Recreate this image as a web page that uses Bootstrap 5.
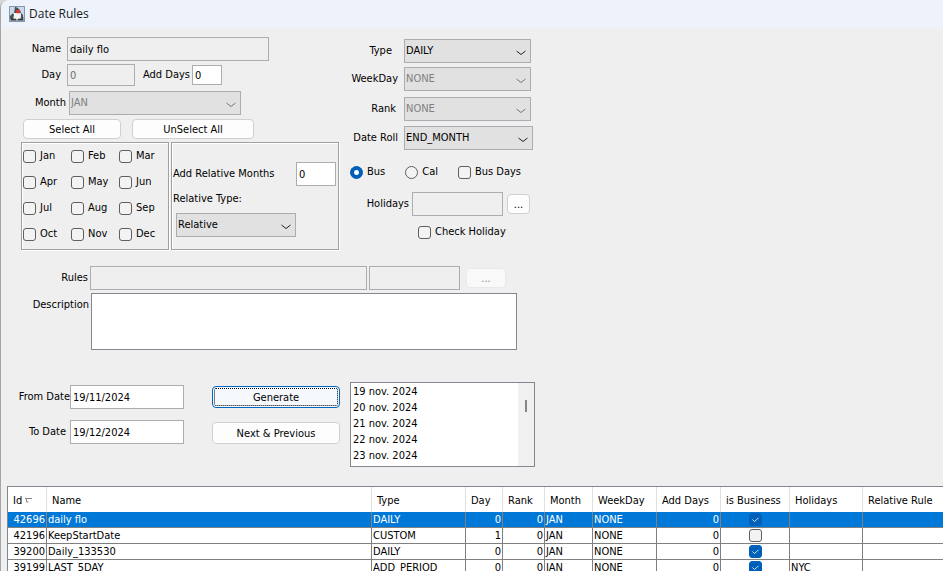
<!DOCTYPE html>
<html lang="en">
<head>
<meta charset="utf-8">
<meta name="viewport" content="width=device-width, initial-scale=1">
<title>Date Rules</title>
<link href="https://cdn.jsdelivr.net/npm/bootstrap@5.3.0/dist/css/bootstrap.min.css" rel="stylesheet">
<style>
  :root { --line: #abadb3; --edge: #828790; --face: #efefef; --combo: #e1e1e1; }
  body { font-family: Tahoma, "DejaVu Sans Condensed", "Noto Sans", sans-serif; font-size: 11px; line-height: 16px; color: #000; background: #d9d9d9; }
  .window { background: var(--face); border-left: 1px solid #a5a5a8; border-top-left-radius: 8px; }
  .titlebar { height: 28px; background: #eef3fb; font-family: "Segoe UI", "Open Sans", sans-serif; font-size: 12px; color: #1a1a1a; border-top-left-radius: 8px; }
  .form-area { padding: 9px 0 0 20px; }
  .left-side { width: 318px; }
  .right-side { padding: 2px 0 0 7px; }
  label { white-space: nowrap; }
  .form-control, .form-select { font-size: 11px; line-height: 16px; height: 24px; min-height: 0; padding: 0 2px; border: 1px solid var(--line); border-radius: 0; color: #000; flex: none; }
  .form-control { background: #fff; }
  .form-control:disabled, .form-control[readonly] { background: var(--face); color: #6d6d6d; }
  .form-control[readonly] { color: #000; }
  .form-select { padding: 0 20px 0 1px; background: var(--combo) url("data:image/svg+xml,%3Csvg xmlns='http://www.w3.org/2000/svg' viewBox='0 0 10 6'%3E%3Cpath fill='none' stroke='%23222' d='M.5 1 5 4.500 9.500 1'/%3E%3C/svg%3E") no-repeat right 4px top 10px / 10px 6px; }
  .form-select:disabled { background-color: var(--combo); color: #808080; background-image: url("data:image/svg+xml,%3Csvg xmlns='http://www.w3.org/2000/svg' viewBox='0 0 10 6'%3E%3Cpath fill='none' stroke='%23777' d='M.5 1 5 4.500 9.500 1'/%3E%3C/svg%3E"); }
  .short { height: 22px; }
  .shorter { height: 20px; }
  .btn { font-size: 11px; line-height: 16px; height: 20px; padding: 1px 0 0; background: #fdfdfd; border: 1px solid #d0d0d0; border-radius: 4px; color: #000; flex: none; }
  .btn:disabled { background: #f9f9f9; border-color: #e9e9e9; color: #838383; opacity: 1; }
  .btn-tall { height: 22px; width: 128px; padding-top: 2px; }
  .btn-default { background: #f5f9fe; border-color: #0067c0; outline: 1px dotted #000; outline-offset: -3px; }
  .form-check-input { width: 13px; height: 13px; margin: 0; border: 1px solid #5f5f5f; background-color: #f3f3f3; flex: none; }
  .form-check-input[type=checkbox] { border-radius: 3px; }
  .form-check-input:checked { background-color: #005fb8; border-color: #005fb8; }
  .form-check-input:checked[type=checkbox] { background-image: url("data:image/svg+xml,%3Csvg xmlns='http://www.w3.org/2000/svg' viewBox='0 0 13 13'%3E%3Cpath fill='none' stroke='%23fff' d='M3 6.500 5.500 9 10 4.500'/%3E%3C/svg%3E"); }
  .form-check-input:checked[type=radio] { background-image: radial-gradient(circle, #fff 2px, #005fb8 3px); }
  .tick { display: flex; align-items: center; gap: 4px; height: 16px; }
  .lab { width: 46px; text-align: right; flex: none; }
  .lab-month { width: 48px; padding-right: 3px; }
  .lab-r { width: 58px; text-align: right; flex: none; }
  .lab-in { padding-right: 2px; }
  .lab-in-2 { padding-right: 6px; }
  .lab-type { padding-right: 12px; }
  .lab-wide { width: 70px; text-align: right; flex: none; }
  .lab-rules { width: 67px; text-align: right; flex: none; }
  .lab-hol { width: 66px; text-align: right; flex: none; padding-right: 3px; }
  .lab-date { width: 49px; direction: rtl; flex: none; }
  .row-a { margin-bottom: 3px; }
  .row-b { margin-bottom: 5px; }
  .row-c { margin-bottom: 6px; }
  .gap-tight { gap: 2px; }
  .buttons { padding: 1px 0 0 2px; gap: 11px; }
  .choices { gap: 20px; margin-top: 14px; }
  .date-fields { display: grid; gap: 11px; padding-top: 3px; align-content: start; }
  .date-actions { display: grid; gap: 14px; padding: 4px 10px 0 28px; align-content: start; }
  .w-name { width: 202px; } .w-day { width: 68px; } .w-add { width: 30px; } .w-month { width: 172px; }
  .w-sel { width: 98px; } .w-unsel { width: 122px; } .w-combo { width: 127px; } .w-roll { width: 129px; }
  .w-rel { width: 120px; } .w-num { width: 40px; } .w-hol { width: 91px; } .w-dots { width: 23px; }
  .w-rules { width: 277px; } .w-dots2 { width: 40px; } .w-date { width: 114px; }
  .panel { border: 1px solid #a0a0a0; box-shadow: inset 1px 1px #fff, 1px 1px #fff; height: 108px; }
  .months { width: 148px; display: grid; grid-template-columns: repeat(3, 48px); grid-auto-rows: 26px; align-items: center; padding: 0 1px; }
  .relative { width: 168px; padding: 19px 2px 0 0; }
  .relative label { padding-left: 1px; }
  .relative .form-select { margin-left: 4px; }
  .desc { width: 426px; height: 57px; border-color: var(--edge); resize: none; }
  .results { width: 185px; height: 85px; background: #fff; border: 1px solid var(--edge); }
  .results ul { padding: 1px 0 0 2px; }
  .track { width: 16px; background: #f0f0f0; padding: 17px 7px 0; }
  .thumb { width: 2px; height: 12px; background: #858585; }
  .rules-table { border-top: 1px solid var(--edge); border-left: 1px solid var(--edge); margin: 19px 0 0 6px; background: #fff; }
  .rules-table table { table-layout: fixed; width: 100%; min-width: 930px; border-collapse: separate; border-spacing: 0; }
  .rules-table th { height: 25px; font-weight: 400; padding: 2px 0 0 5px; border-right: 1px solid #e0e0e0; white-space: nowrap; }
  .rules-table td { height: 16px; line-height: 15px; padding: 0 1px; border-right: 1px solid #808080; border-bottom: 1px solid #808080; white-space: nowrap; }
  .rules-table td:last-child, .rules-table th:last-child { border-right: 0; }
  .rules-table td .form-check-input { display: block; margin: 1px auto; }
  .rules-table .picked td { background: #0078d7; color: #fff; }
</style>
<script src="https://cdn.jsdelivr.net/npm/bootstrap@5.3.0/dist/js/bootstrap.bundle.min.js"></script>
</head>
<body>
<div class="window vh-100 overflow-hidden">
  <header class="titlebar d-flex align-items-center">
    <svg class="ms-2" width="16" height="16" viewBox="0 0 16 16" aria-hidden="true">
      <rect width="16" height="16" fill="#7f97b4"/><rect x="1" y="1" width="14" height="10" fill="#cbd9e8"/>
      <path d="M1 11h14v4H1z" fill="#98a3ae"/>
      <path d="M6 1c2 0 5 2 6 6H5z" fill="#4a525b"/>
      <path d="M5 7h6l1 3-1 3H5l-1-3z" fill="#f4f4f4"/>
      <path d="M1 10l3-3 1 2-1 4H1zM12 7l2 2v5l-2-2z" fill="#4a5057"/>
      <circle cx="9" cy="5.500" r="2" fill="#e0362c"/><path d="M2 13.500h5M9 13.500h5" stroke="#333" stroke-width="1.500"/>
    </svg>
    <span class="ps-1">Date Rules</span>
  </header>

  <main>
    <form class="form-area">
      <div class="d-flex">
        <div class="left-side">
          <div class="d-flex align-items-center row-a">
            <label class="lab lab-in-2" for="name">Name</label>
            <input class="form-control w-name" id="name" value="daily flo" readonly>
          </div>
          <div class="d-flex align-items-center row-b">
            <label class="lab lab-in-2" for="day">Day</label>
            <input class="form-control short w-day" id="day" value="0" disabled>
            <label class="ps-2 lab-in" for="addDays">Add Days</label>
            <input class="form-control shorter w-add" id="addDays" value="0">
          </div>
          <div class="d-flex align-items-center row-a">
            <label class="lab lab-month" for="month">Month</label>
            <select class="form-select w-month" id="month" disabled><option>JAN</option></select>
          </div>
          <div class="d-flex row-a buttons">
            <button type="button" class="btn w-sel">Select All</button>
            <button type="button" class="btn w-unsel">UnSelect All</button>
          </div>
          <div class="d-flex justify-content-between">
            <div class="panel months">
              <div class="tick"><input class="form-check-input" type="checkbox" id="m1"><label for="m1">Jan</label></div>
              <div class="tick"><input class="form-check-input" type="checkbox" id="m2"><label for="m2">Feb</label></div>
              <div class="tick"><input class="form-check-input" type="checkbox" id="m3"><label for="m3">Mar</label></div>
              <div class="tick"><input class="form-check-input" type="checkbox" id="m4"><label for="m4">Apr</label></div>
              <div class="tick"><input class="form-check-input" type="checkbox" id="m5"><label for="m5">May</label></div>
              <div class="tick"><input class="form-check-input" type="checkbox" id="m6"><label for="m6">Jun</label></div>
              <div class="tick"><input class="form-check-input" type="checkbox" id="m7"><label for="m7">Jul</label></div>
              <div class="tick"><input class="form-check-input" type="checkbox" id="m8"><label for="m8">Aug</label></div>
              <div class="tick"><input class="form-check-input" type="checkbox" id="m9"><label for="m9">Sep</label></div>
              <div class="tick"><input class="form-check-input" type="checkbox" id="m10"><label for="m10">Oct</label></div>
              <div class="tick"><input class="form-check-input" type="checkbox" id="m11"><label for="m11">Nov</label></div>
              <div class="tick"><input class="form-check-input" type="checkbox" id="m12"><label for="m12">Dec</label></div>
            </div>
            <div class="panel relative">
              <div class="d-flex align-items-center justify-content-between row-b">
                <label for="relMonths">Add Relative Months</label>
                <input class="form-control w-num" id="relMonths" value="0">
              </div>
              <label class="d-block row-c" for="relType">Relative Type:</label>
              <select class="form-select w-rel" id="relType"><option>Relative</option></select>
            </div>
          </div>
        </div>

        <div class="right-side">
          <div class="d-flex align-items-center mb-1">
            <label class="lab-r lab-type" for="type">Type</label>
            <select class="form-select w-combo" id="type"><option>DAILY</option></select>
          </div>
          <div class="d-flex align-items-center row-c">
            <label class="lab-r lab-in-2" for="weekDay">WeekDay</label>
            <select class="form-select w-combo" id="weekDay" disabled><option>NONE</option></select>
          </div>
          <div class="d-flex align-items-center row-b">
            <label class="lab-r pe-2" for="rank">Rank</label>
            <select class="form-select w-combo" id="rank" disabled><option>NONE</option></select>
          </div>
          <div class="d-flex align-items-center">
            <label class="lab-r lab-in-2" for="roll">Date Roll</label>
            <select class="form-select w-roll" id="roll"><option>END_MONTH</option></select>
          </div>
          <div class="d-flex choices ps-1">
            <div class="tick"><input class="form-check-input" type="radio" name="calendar" id="bus" checked><label for="bus">Bus</label></div>
            <div class="tick"><input class="form-check-input" type="radio" name="calendar" id="cal"><label for="cal">Cal</label></div>
            <div class="tick"><input class="form-check-input" type="checkbox" id="busDays"><label for="busDays">Bus Days</label></div>
          </div>
          <div class="d-flex align-items-center mt-2 pt-1">
            <label class="lab-hol" for="holidays">Holidays</label>
            <input class="form-control w-hol" id="holidays" readonly>
            <button type="button" class="btn w-dots ms-1" aria-label="Choose holidays">...</button>
          </div>
          <div class="tick mt-2 ps-5 ms-4"><input class="form-check-input" type="checkbox" id="checkHol"><label for="checkHol">Check Holiday</label></div>
        </div>
      </div>

      <div class="d-flex align-items-center mt-3 row-a gap-tight">
        <label class="lab-rules" for="rules">Rules</label>
        <input class="form-control w-rules" id="rules" readonly>
        <input class="form-control w-hol" aria-label="Rule value" readonly>
        <button type="button" class="btn w-dots2 ms-1" aria-label="Choose rules" disabled>...</button>
      </div>
      <div class="d-flex align-items-start">
        <label class="lab-wide lab-in pt-1" for="desc">Description</label>
        <textarea class="form-control desc" id="desc"></textarea>
      </div>

      <div class="d-flex mt-4 pt-2">
        <div class="date-fields">
          <div class="d-flex align-items-center">
            <label class="lab-date" for="from">From Date</label>
            <input class="form-control w-date" id="from" value="19/11/2024">
          </div>
          <div class="d-flex align-items-center">
            <label class="lab-date ps-1 pe-1" for="to">To Date</label>
            <input class="form-control w-date" id="to" value="19/12/2024">
          </div>
        </div>
        <div class="date-actions">
          <button type="button" class="btn btn-tall btn-default">Generate</button>
          <button type="button" class="btn btn-tall">Next &amp; Previous</button>
        </div>
        <div class="results d-flex">
          <ul class="list-unstyled mb-0 flex-grow-1">
            <li>19 nov. 2024</li><li>20 nov. 2024</li><li>21 nov. 2024</li><li>22 nov. 2024</li><li>23 nov. 2024</li>
          </ul>
          <div class="track"><div class="thumb"></div></div>
        </div>
      </div>
    </form>

    <div class="rules-table">
      <table>
        <colgroup><col width="39"><col width="325"><col width="94"><col width="37"><col width="42"><col width="48"><col width="64"><col width="64"><col width="69"><col width="73"><col></colgroup>
        <thead>
          <tr><th>Id <svg width="7" height="6" viewBox="0 0 7 6" aria-hidden="true"><path d="M0 .5h7M1.500 1v3h2" fill="none" stroke="#888"/></svg></th><th>Name</th><th>Type</th><th>Day</th><th>Rank</th><th>Month</th><th>WeekDay</th><th>Add Days</th><th>is Business</th><th>Holidays</th><th>Relative Rule</th></tr>
        </thead>
        <tbody>
          <tr class="picked"><td class="text-end">42696</td><td>daily flo</td><td>DAILY</td><td class="text-end">0</td><td class="text-end">0</td><td>JAN</td><td>NONE</td><td class="text-end">0</td><td><input class="form-check-input" type="checkbox" aria-label="is Business" checked></td><td></td><td></td></tr>
          <tr><td class="text-end">42196</td><td>KeepStartDate</td><td>CUSTOM</td><td class="text-end">1</td><td class="text-end">0</td><td>JAN</td><td>NONE</td><td class="text-end">0</td><td><input class="form-check-input" type="checkbox" aria-label="is Business"></td><td></td><td></td></tr>
          <tr><td class="text-end">39200</td><td>Daily_133530</td><td>DAILY</td><td class="text-end">0</td><td class="text-end">0</td><td>JAN</td><td>NONE</td><td class="text-end">0</td><td><input class="form-check-input" type="checkbox" aria-label="is Business" checked></td><td></td><td></td></tr>
          <tr><td class="text-end">39199</td><td>LAST_5DAY</td><td>ADD_PERIOD</td><td class="text-end">0</td><td class="text-end">0</td><td>JAN</td><td>NONE</td><td class="text-end">0</td><td><input class="form-check-input" type="checkbox" aria-label="is Business" checked></td><td>NYC</td><td></td></tr>
        </tbody>
      </table>
    </div>
  </main>
</div>
</body>
</html>
